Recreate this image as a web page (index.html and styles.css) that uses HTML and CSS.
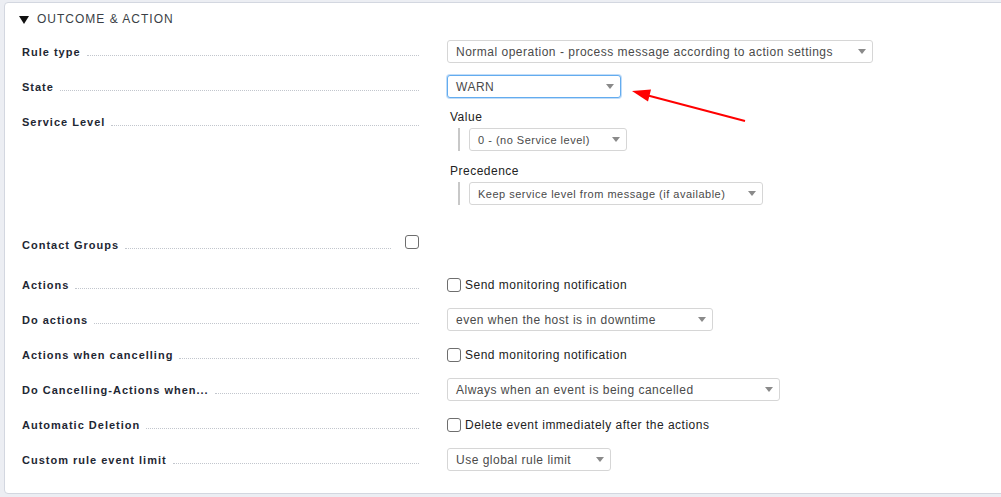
FILE: index.html
```html
<!DOCTYPE html>
<html>
<head>
<meta charset="utf-8">
<link rel="stylesheet" href="styles.css">
</head>
<body>
<div class="page">
  <div class="card">
    <div class="title"><span class="tri"></span><span>OUTCOME &amp; ACTION</span></div>
    <div class="rows">
      <div class="row">
        <div class="label"><span>Rule type</span><span class="dots"></span></div>
        <div class="value"><div class="select w-rule"><span>Normal operation - process message according to action settings</span><span class="caret"></span></div></div>
      </div>
      <div class="row">
        <div class="label"><span>State</span><span class="dots"></span></div>
        <div class="value"><div class="select w-state focus"><span>WARN</span><span class="caret"></span></div></div>
      </div>
      <div class="row row-sl">
        <div class="label"><span>Service Level</span><span class="dots"></span></div>
        <div class="value sl">
          <div class="sub-title">Value</div>
          <div class="sub-body"><div class="select w-val"><span>0 - (no Service level)</span><span class="caret"></span></div></div>
          <div class="sub-title second">Precedence</div>
          <div class="sub-body"><div class="select w-prec"><span>Keep service level from message (if available)</span><span class="caret"></span></div></div>
        </div>
      </div>
      <div class="row row-cg">
        <div class="label"><span>Contact Groups</span><span class="dots short"></span><span class="cb cb-label"></span></div>
        <div class="value"></div>
      </div>
      <div class="row">
        <div class="label"><span>Actions</span><span class="dots"></span></div>
        <div class="value"><label class="check"><span class="cb"></span><span>Send monitoring notification</span></label></div>
      </div>
      <div class="row">
        <div class="label"><span>Do actions</span><span class="dots"></span></div>
        <div class="value"><div class="select w-do"><span>even when the host is in downtime</span><span class="caret"></span></div></div>
      </div>
      <div class="row">
        <div class="label"><span>Actions when cancelling</span><span class="dots"></span></div>
        <div class="value"><label class="check"><span class="cb"></span><span>Send monitoring notification</span></label></div>
      </div>
      <div class="row">
        <div class="label"><span>Do Cancelling-Actions when...</span><span class="dots"></span></div>
        <div class="value"><div class="select w-cancel"><span>Always when an event is being cancelled</span><span class="caret"></span></div></div>
      </div>
      <div class="row">
        <div class="label"><span>Automatic Deletion</span><span class="dots"></span></div>
        <div class="value"><label class="check"><span class="cb"></span><span>Delete event immediately after the actions</span></label></div>
      </div>
      <div class="row">
        <div class="label"><span>Custom rule event limit</span><span class="dots"></span></div>
        <div class="value"><div class="select w-limit"><span>Use global rule limit</span><span class="caret"></span></div></div>
      </div>
    </div>
  </div>
  <svg class="arrow" width="1001" height="497" viewBox="0 0 1001 497">
    <line x1="745" y1="121" x2="648" y2="95.5" stroke="#ff0000" stroke-width="2"/>
    <polygon points="632,91 651,89.5 648,101.5" fill="#ff0000"/>
  </svg>
</div>
</body>
</html>
```

FILE: styles.css
```css
html, body {
  margin: 0;
  padding: 0;
  overflow: hidden;
  background: #eceef3;
}

.page {
  position: relative;
  width: 1001px;
  height: 497px;
  padding: 2px 0 0 4px;
  box-sizing: border-box;
  font-family: "Liberation Sans", Arial, sans-serif;
}

.card {
  box-sizing: border-box;
  height: 492px;
  margin-right: -12px;
  background: #ffffff;
  border: 1px solid #d3d7e0;
  border-radius: 4px;
  padding: 8px 0 0 17px;
}

.title {
  display: flex;
  align-items: center;
  height: 15px;
  font-size: 12px;
  letter-spacing: 1px;
  color: #3a3f46;
  margin-left: -3px;
}

.tri {
  width: 0;
  height: 0;
  border-left: 5px solid transparent;
  border-right: 5px solid transparent;
  border-top: 8px solid #111;
  margin: 3px 8px 0 0;
}

.rows {
  display: flex;
  flex-direction: column;
  gap: 12px;
  margin-top: 14px;
}

.row {
  display: grid;
  grid-template-columns: 397px 1fr;
  column-gap: 28px;
  align-items: start;
  min-height: 23px;
}

.row-sl { margin-bottom: 16px; }
.row-cg { margin-bottom: 5px; }

.label {
  display: flex;
  align-items: baseline;
  font-size: 11px;
  font-weight: bold;
  letter-spacing: 1px;
  color: #1e2733;
  line-height: 22px;
  padding-top: 1px;
  white-space: nowrap;
}

.dots {
  flex: 1;
  margin-left: 6px;
  border-bottom: 1px dotted #c2c6cd;
}

.dots.short {
  margin-right: 14px;
}

.cb {
  display: inline-block;
  box-sizing: border-box;
  width: 14px;
  height: 14px;
  border: 1px solid #6e6e6e;
  border-radius: 3px;
  background: #fff;
  flex: none;
}

.cb-label {
  align-self: center;
  margin-top: -7px;
}

.value {
  font-size: 12px;
  color: #222;
}

.select {
  box-sizing: border-box;
  display: flex;
  align-items: center;
  justify-content: space-between;
  height: 23px;
  padding: 0 6px 0 8px;
  border: 1px solid #d6d6d6;
  border-radius: 3px;
  background: #fff;
  color: #4a4a4a;
  font-size: 12px;
  letter-spacing: 0.5px;
  white-space: nowrap;
}

.select.focus {
  border-color: #63acef;
  box-shadow: 0 0 0 1px rgba(120, 180, 240, 0.45);
}

.caret {
  width: 0;
  height: 0;
  border-left: 4px solid transparent;
  border-right: 4px solid transparent;
  border-top: 5px solid #8a8a8a;
  margin-left: 8px;
}

.w-rule { width: 426px; }
.w-state { width: 174px; }
.w-val { width: 158px; }
.w-prec { width: 294px; }
.w-do { width: 266px; }
.w-cancel { width: 333px; }
.w-limit { width: 164px; }

.sl { padding-left: 3px; }

.sub-title {
  font-size: 12px;
  line-height: 14px;
  letter-spacing: 0.5px;
  color: #222;
}

.sub-title.second { margin-top: 13px; }

.sub-body {
  margin-top: 4px;
  margin-left: 8px;
  padding-left: 9px;
  border-left: 2px solid #c8c8c8;
}

.sub-body .select { font-size: 11px; }

.check {
  display: flex;
  align-items: center;
  height: 23px;
  gap: 4px;
  font-size: 12px;
  letter-spacing: 0.5px;
  color: #222;
}

.arrow {
  position: absolute;
  left: 0;
  top: 0;
  pointer-events: none;
}
```
